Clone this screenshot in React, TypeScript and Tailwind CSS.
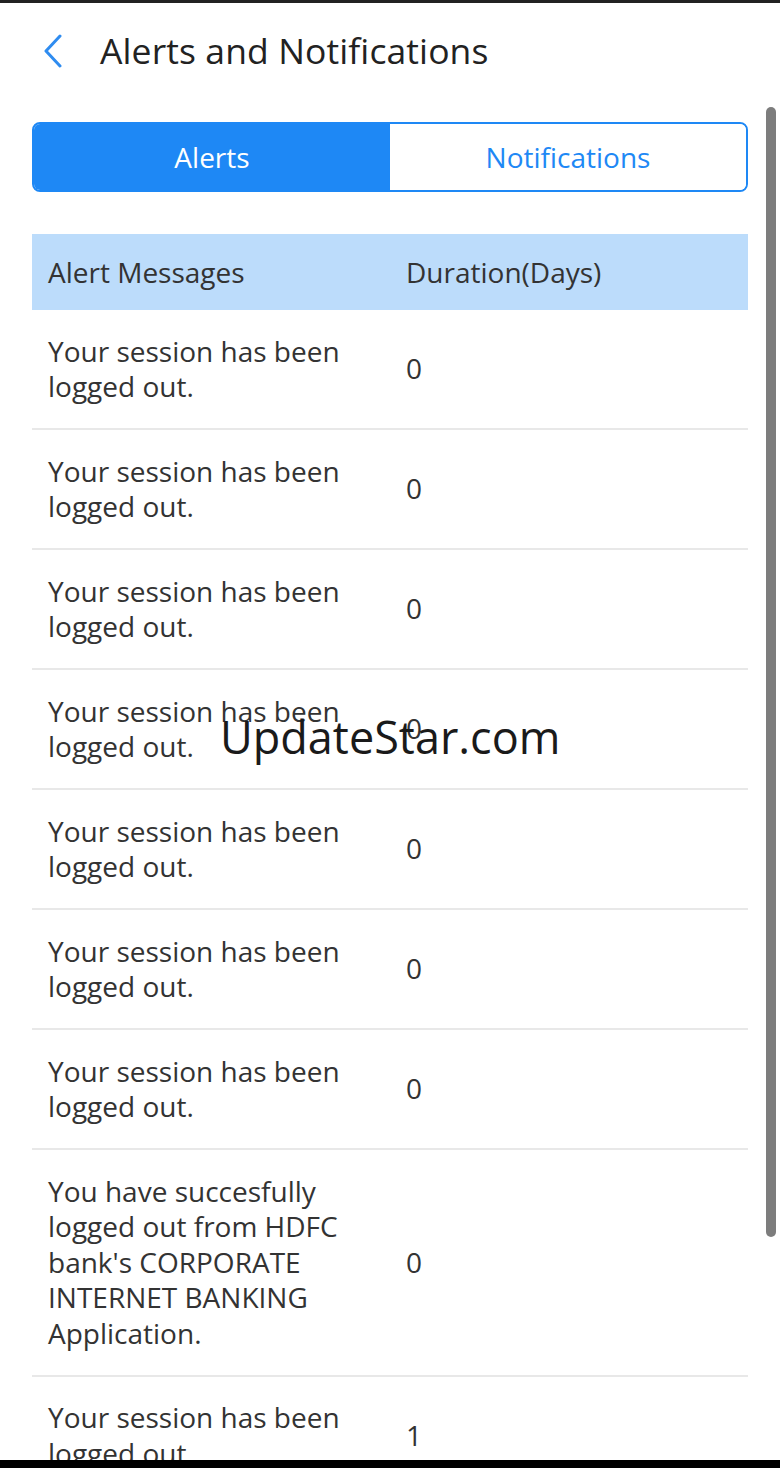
const rows = [
  { msg: "Your session has been logged out.", days: "0" },
  { msg: "Your session has been logged out.", days: "0" },
  { msg: "Your session has been logged out.", days: "0" },
  { msg: "Your session has been logged out.", days: "0" },
  { msg: "Your session has been logged out.", days: "0" },
  { msg: "Your session has been logged out.", days: "0" },
  { msg: "Your session has been logged out.", days: "0" },
  {
    msg: "You have succesfully logged out from HDFC bank's CORPORATE INTERNET BANKING Application.",
    days: "0",
  },
  { msg: "Your session has been logged out.", days: "1" },
]

const BackIcon = () => (
  <svg width="20" height="34" viewBox="0 0 20 34" fill="none">
    <polyline points="17,2 3,17 17,32" stroke="#2f8cf0" strokeWidth="3" strokeLinecap="round" strokeLinejoin="round" />
  </svg>
)

export default function App() {
  return (
    <div className="relative h-[1468px] w-[780px] overflow-hidden bg-white font-['Open_Sans',sans-serif] text-[#333]">
      <div className="h-[3px] bg-[#222]" />

      {/* header */}
      <div className="flex h-[97px] items-center pb-[2px]">
        <div className="flex w-[100px] pl-[43px]">
          <BackIcon />
        </div>
        <h1 className="text-[35.5px] tracking-[0.1px] text-[#222]">Alerts and Notifications</h1>
      </div>

      <div className="px-[32px] pt-[22px]">
        {/* tabs */}
        <div className="flex h-[70px] overflow-hidden rounded-[8px] border-2 border-[#1e88f5]">
          <div className="flex flex-1 items-center justify-center bg-[#1e88f5] text-[28px] text-white">Alerts</div>
          <div className="flex flex-1 items-center justify-center bg-white text-[28px] text-[#1e88f5]">Notifications</div>
        </div>

        {/* table */}
        <div className="mt-[42px]">
          <div className="grid h-[76px] grid-cols-2 items-center bg-[#bcdcfb] text-[28px]">
            <div className="px-4">Alert Messages</div>
            <div className="px-4">Duration(Days)</div>
          </div>
          {rows.map((r, i) => (
            <div key={i} className="grid grid-cols-2 items-center border-b-2 border-[#e8e8e8] py-[23.5px] text-[28px] leading-[35.5px]">
              <div className="px-4">{r.msg}</div>
              <div className="px-4">{r.days}</div>
            </div>
          ))}
        </div>
      </div>

      {/* watermark */}
      <div className="absolute left-[220px] top-[714px] text-[45px] leading-none text-[#1a1a1a]">UpdateStar.com</div>

      {/* scrollbar */}
      <div className="absolute left-[766px] top-[107px] h-[1130px] w-[10px] rounded-full bg-[#7d7d7d]" />

      <div className="absolute bottom-0 left-0 h-[8px] w-full bg-black" />
    </div>
  )
}
